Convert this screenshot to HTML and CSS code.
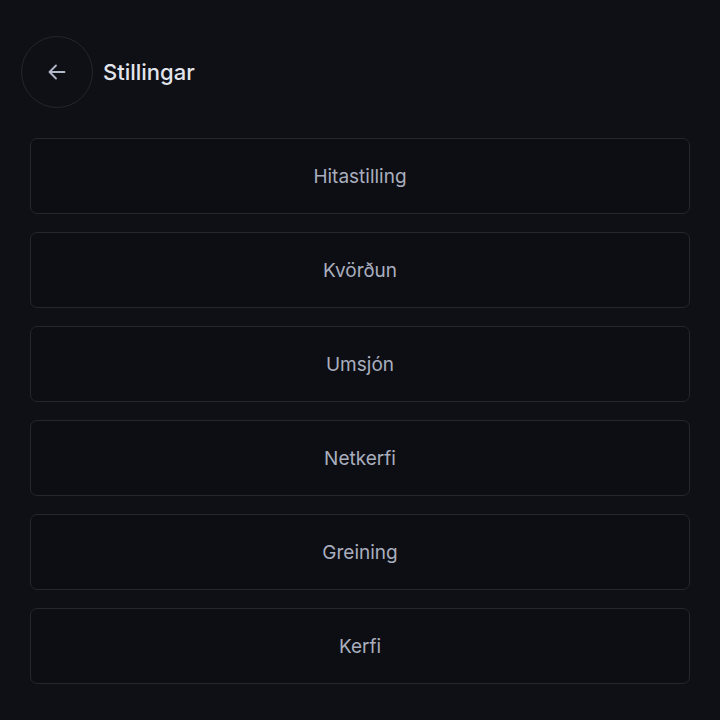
FILE: index.html
```html
<!DOCTYPE html>
<html lang="is">
<head>
<meta charset="utf-8">
<link rel="stylesheet" href="styles.css">
</head>
<body>
<div class="page">
  <header class="header">
    <button class="back" aria-label="Til baka">
      <svg width="22" height="22" viewBox="0 0 22 22" fill="none" stroke="currentColor" stroke-width="1.8" stroke-linecap="round" stroke-linejoin="round"><path d="M18.5 11H3.5M10 4.5L3.5 11l6.5 6.5"/></svg>
    </button>
    <h1 class="title">Stillingar</h1>
  </header>
  <nav class="list">
    <button class="item">Hitastilling</button>
    <button class="item">Kvörðun</button>
    <button class="item">Umsjón</button>
    <button class="item">Netkerfi</button>
    <button class="item">Greining</button>
    <button class="item">Kerfi</button>
  </nav>
</div>
</body>
</html>
```
FILE: styles.css
```css
* { box-sizing: border-box; }
html, body { margin: 0; height: 100%; }
body {
  background: #0f1016;
  font-family: Inter, "Noto Sans", sans-serif;
  color: #e3e5ec;
}
.page {
  padding: 36px 30px 0 30px;
}
.header {
  display: flex;
  align-items: center;
  gap: 10px;
  margin-left: -9px;
  height: 72px;
}
.back {
  width: 72px;
  height: 72px;
  border-radius: 50%;
  border: 1.5px solid #24262d;
  background: transparent;
  color: #b4b8cb;
  display: flex;
  align-items: center;
  justify-content: center;
  padding: 0;
}
.title {
  margin: 0;
  font-size: 22px;
  font-weight: 500;
  color: #e3e5ec;
}
.list {
  margin-top: 30px;
  display: flex;
  flex-direction: column;
  gap: 18px;
}
.item {
  height: 76px;
  width: 100%;
  border: 1.5px solid #25272e;
  border-radius: 7px;
  background: #0d0e13;
  color: #a9aebf;
  font-family: Inter, "Noto Sans", sans-serif;
  font-size: 19px;
  font-weight: 400;
  padding: 0;
}
```
